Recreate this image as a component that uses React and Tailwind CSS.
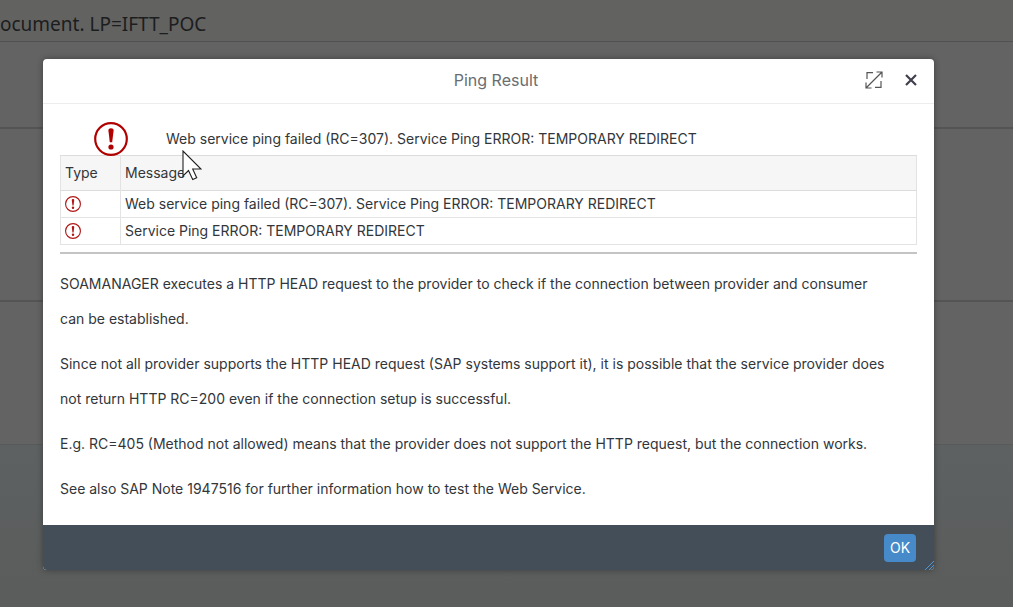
import React from 'react'

const messages = [
  'Web service ping failed (RC=307). Service Ping ERROR: TEMPORARY REDIRECT',
  'Service Ping ERROR: TEMPORARY REDIRECT',
]

const notes = [
  'SOAMANAGER executes a HTTP HEAD request to the provider to check if the connection between provider and consumer can be established.',
  'Since not all provider supports the HTTP HEAD request (SAP systems support it), it is possible that the service provider does not return HTTP RC=200 even if the connection setup is successful.',
  'E.g. RC=405 (Method not allowed) means that the provider does not support the HTTP request, but the connection works.',
  'See also SAP Note 1947516 for further information how to test the Web Service.',
]

function ErrorIcon({ className, stroke }) {
  return (
    <svg viewBox="0 0 34 34" className={className} role="img" aria-label="Error">
      <circle cx="17" cy="17" r="15.8" fill="none" stroke="currentColor" strokeWidth={stroke} />
      <path d="M14.4 8.6c0-1.6 1-2.4 2.6-2.4s2.6.8 2.6 2.4l-1.4 11.6h-2.4z" fill="currentColor" />
      <circle cx="17" cy="25" r="2.6" fill="currentColor" />
    </svg>
  )
}

function ExpandIcon() {
  return (
    <svg viewBox="0 0 18 18" className="w-[18px] h-[18px]" fill="none" stroke="currentColor" strokeWidth="1.2">
      <path d="M1 17 17 1M11.5 1H17v5.5M1 11.5V17h5.5" />
      <path d="M8 1.6H2V8M10 16.4h6V10" />
    </svg>
  )
}

function CloseIcon() {
  return (
    <svg viewBox="0 0 12 12" className="w-3 h-3" fill="none" stroke="currentColor" strokeWidth="2.2">
      <path d="m1 1 10 10M11 1 1 11" />
    </svg>
  )
}

function Cursor() {
  return (
    <svg viewBox="0 0 20 31" className="absolute left-[139px] top-[91px] w-5 h-[31px]" aria-hidden="true">
      <path
        d="M1 1v25l5.5-5.5 4.2 9 4-1.7-4-8.8H19z"
        fill="#fff"
        stroke="#222"
        strokeWidth="1.1"
      />
    </svg>
  )
}

export default function App() {
  return (
    <div className="relative min-h-screen flex flex-col bg-[#636363] text-[#32363a] font-[Inter,sans-serif]">
      {/* Page behind the dialog */}
      <header className="h-[42px] pt-1 bg-[#626261] border-b border-[#505050]">
        <p className="text-[19px] leading-10 text-[#1c1d1e] font-['Noto_Sans',sans-serif] whitespace-nowrap">ocument. LP=IFTT_POC</p>
      </header>
      <div className="h-[87px] border-b-2 border-[#545454]" />
      <div className="h-[173px] border-b-2 border-[#545454]" />
      <div className="h-[143px] border-b border-[#585a5a]" />
      <div className="flex-1 bg-linear-to-b from-[#5d6161] to-[#5b5c5c]" />

      <div className="absolute inset-0 pt-[59px] pl-[43px] pr-[79px]">
        <section
          role="dialog"
          aria-labelledby="dialog-title"
          className="relative rounded bg-white shadow-[0_0_6px_rgba(0,0,0,0.35)] overflow-hidden"
        >
          <header className="flex items-center h-[45px] pr-4 pb-0.5 border-b border-[#ececec]">
            <h1 id="dialog-title" className="flex-1 pl-[84px] text-center text-base text-[#6a6d70]">
              Ping Result
            </h1>
            <div className="flex items-center gap-[22px] pr-px">
              <button type="button" aria-label="Maximize" className="text-[#555]">
                <ExpandIcon />
              </button>
              <button type="button" aria-label="Close" className="text-[#40404f]">
                <CloseIcon />
              </button>
            </div>
          </header>

          <div className="px-[17px] pb-[19px] text-sm">
            <div className="flex items-center gap-[38px] h-[51px] pt-[18px] pl-[34px]">
              <ErrorIcon className="w-[34px] h-[34px] text-[#b00000]" stroke="2.2" />
              <p>{messages[0]}</p>
            </div>

            <table className="w-full border border-[#e3e3e3] border-collapse text-left">
              <thead className="bg-[#f6f6f6]">
                <tr className="h-[35px] border-b border-t border-[#dcdcdc]">
                  <th className="w-[60px] px-1 border-r border-[#e3e3e3] font-normal">Type</th>
                  <th className="px-1 font-normal">Message</th>
                </tr>
              </thead>
              <tbody>
                {messages.map((text) => (
                  <tr key={text} className="h-[27px] border-b border-[#e3e3e3]">
                    <td className="px-1 border-r border-[#e3e3e3]">
                      <ErrorIcon className="w-4 h-4 text-[#b01818]" stroke="2.4" />
                    </td>
                    <td className="px-1">{text}</td>
                  </tr>
                ))}
              </tbody>
            </table>

            <hr className="mt-[7px] mb-3 border-t-2 border-[#c4c4c4]" />

            <div className="pr-6 space-y-[10px] leading-[35px]">
              {notes.map((text) => (
                <p key={text}>{text}</p>
              ))}
            </div>
          </div>

          <footer className="flex items-center justify-end h-[45px] px-[18px] bg-[#434e58]">
            <button type="button" className="w-8 h-7 rounded-sm bg-[#478ac9] text-sm text-white">
              OK
            </button>
          </footer>

          <svg viewBox="0 0 10 10" className="absolute right-0 bottom-0 w-[10px] h-[10px]" stroke="#5596cf" fill="none" aria-hidden="true">
            <path d="M1 10 10 1M5 10l5-5" />
          </svg>
          <Cursor />
        </section>
      </div>
    </div>
  )
}
